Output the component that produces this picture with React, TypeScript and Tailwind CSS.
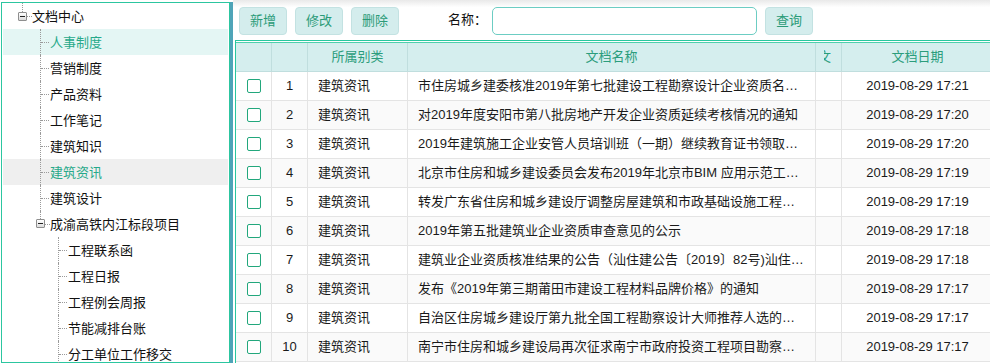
import React from 'react';

interface Doc {
  no: number;
  category: string;
  title: string;
  date: string;
}

const docs: Doc[] = [
  { no: 1, category: '建筑资讯', title: '市住房城乡建委核准2019年第七批建设工程勘察设计企业资质名…', date: '2019-08-29 17:21' },
  { no: 2, category: '建筑资讯', title: '对2019年度安阳市第八批房地产开发企业资质延续考核情况的通知', date: '2019-08-29 17:20' },
  { no: 3, category: '建筑资讯', title: '2019年建筑施工企业安管人员培训班（一期）继续教育证书领取…', date: '2019-08-29 17:20' },
  { no: 4, category: '建筑资讯', title: '北京市住房和城乡建设委员会发布2019年北京市BIM 应用示范工…', date: '2019-08-29 17:19' },
  { no: 5, category: '建筑资讯', title: '转发广东省住房和城乡建设厅调整房屋建筑和市政基础设施工程…', date: '2019-08-29 17:19' },
  { no: 6, category: '建筑资讯', title: '2019年第五批建筑业企业资质审查意见的公示', date: '2019-08-29 17:18' },
  { no: 7, category: '建筑资讯', title: '建筑业企业资质核准结果的公告（汕住建公告〔2019〕82号)汕住…', date: '2019-08-29 17:18' },
  { no: 8, category: '建筑资讯', title: '发布《2019年第三期莆田市建设工程材料品牌价格》的通知', date: '2019-08-29 17:17' },
  { no: 9, category: '建筑资讯', title: '自治区住房城乡建设厅第九批全国工程勘察设计大师推荐人选的…', date: '2019-08-29 17:17' },
  { no: 10, category: '建筑资讯', title: '南宁市住房和城乡建设局再次征求南宁市政府投资工程项目勘察…', date: '2019-08-29 17:17' },
];

// first level under 文档中心
const children = [
  { name: '人事制度', state: 'selected' },
  { name: '营销制度' },
  { name: '产品资料' },
  { name: '工作笔记' },
  { name: '建筑知识' },
  { name: '建筑资讯', state: 'hover' },
  { name: '建筑设计' },
];

const projectItems = ['工程联系函', '工程日报', '工程例会周报', '节能减排台账', '分工单位工作移交'];

const cols = 'grid grid-cols-[36px_36px_100px_408px_26px_151px]';

const MinusBox: React.FC = () => (
  <span className="flex h-[9px] w-[9px] shrink-0 items-center justify-center rounded-[1px] border border-[#8e8e8e] bg-gradient-to-b from-white to-[#dcdcdc]">
    <span className="h-px w-[5px] bg-[#222]" />
  </span>
);

const Elbow: React.FC = () => (
  <div className="flex h-full w-[9px] shrink-0 items-center border-l border-dotted border-[#9a9a9a]">
    <div className="w-full border-t border-dotted border-[#9a9a9a]" />
  </div>
);

const Sidebar: React.FC = () => (
  <div className="ml-px mt-[2px] w-[229px] shrink-0 border border-[#2cc6a0] bg-white px-px text-[13px] leading-none text-[#111]">
    {/* root */}
    <div className="flex h-[26px] items-center">
      <div className="w-[15px] shrink-0" />
      <div className="flex h-full w-[9px] shrink-0 flex-col items-center">
        <div className="h-[9px] border-l border-dotted border-[#9a9a9a]" />
        <MinusBox />
      </div>
      <div className="w-[5px] border-t border-dotted border-[#9a9a9a]" />
      <span>文档中心</span>
    </div>

    {children.map((c) => (
      <div
        key={c.name}
        className={`flex h-[26px] items-center ${
          c.state === 'selected' ? 'bg-[#e4f6f4]' : c.state === 'hover' ? 'bg-[#efefef]' : ''
        }`}
      >
        <div className="w-[37px] shrink-0" />
        <Elbow />
        <span className={`ml-px ${c.state ? 'text-[#27a98a]' : ''}`}>{c.name}</span>
      </div>
    ))}

    {/* 成渝高铁内江标段项目 */}
    <div className="flex h-[26px] items-center">
      <div className="w-[33px] shrink-0" />
      <div className="flex h-full w-[9px] shrink-0 flex-col items-center">
        <div className="h-[8px] border-l border-dotted border-[#9a9a9a]" />
        <MinusBox />
      </div>
      <div className="w-[5px] border-t border-dotted border-[#9a9a9a]" />
      <span>成渝高铁内江标段项目</span>
    </div>

    {projectItems.map((name) => (
      <div key={name} className="flex h-[26px] items-center">
        <div className="w-[55px] shrink-0" />
        <Elbow />
        <span className="ml-px">{name}</span>
      </div>
    ))}
  </div>
);

const ToolButton: React.FC<{ label: string }> = ({ label }) => (
  <button className="h-[28px] w-[48px] shrink-0 rounded-[4px] border border-[#c3e2e2] bg-[#d4eded] text-[13px] text-[#2b9b78]">
    {label}
  </button>
);

const Checkbox: React.FC = () => (
  <span className="block h-[14px] w-[14px] rounded-[2px] border-[1.5px] border-[#22a77c] bg-white" />
);

export default function App() {
  return (
    <div className="flex h-[363px] w-[990px] overflow-hidden bg-white font-['Liberation_Sans','Noto_Sans_CJK_SC',sans-serif]">
      <Sidebar />

      {/* splitter */}
      <div className="mt-[2px] w-[3px] shrink-0 bg-[#4fa4b8]" />

      <div className="flex min-w-0 flex-1 flex-col">
        {/* toolbar */}
        <div className="flex h-[40px] shrink-0 items-start gap-[8px] bg-gradient-to-b from-[#e9e9e9] via-white via-[18%] to-white pl-[6px] pt-[7px]">
          <ToolButton label="新增" />
          <ToolButton label="修改" />
          <ToolButton label="删除" />
          <span className="ml-[41px] w-[44px] shrink-0 pt-[6px] text-[13px] leading-none text-[#111]">名称：</span>
          <input className="-ml-[8px] h-[28px] w-[265px] shrink-0 rounded-[5px] border border-[#6ccdc3] bg-white px-2 text-[13px] outline-none" />
          <ToolButton label="查询" />
        </div>

        {/* table */}
        <div className="ml-[2px] flex-1 border-l border-t border-[#29c79f] pt-px">
          <div className="w-[757px]">
            <div className={`${cols} h-[30px] border-b border-t border-b-[#c0dede] border-t-[#4fd0ad] bg-[#d5eeee] text-[13px] text-[#2b9d7c]`}>
              <div className="border-r border-[#c0dede]" />
              <div className="border-r border-[#c0dede]" />
              <div className="flex items-center justify-center border-r border-[#c0dede]">所属别类</div>
              <div className="flex items-center justify-center border-r border-[#c0dede]">文档名称</div>
              <div className="flex items-center overflow-hidden border-r border-[#c0dede]">
                <span className="ml-[8px] block w-[7px] overflow-hidden">
                  <span className="-ml-[6px] inline-block">文</span>
                </span>
              </div>
              <div className="flex items-center justify-center">文档日期</div>
            </div>

            {docs.map((d) => (
              <div
                key={d.no}
                className={`${cols} h-[29px] border-b border-[#e4e4e4] text-[13px] text-[#1a1a1a] ${
                  d.no % 2 === 0 ? 'bg-[#fafafa]' : 'bg-white'
                }`}
              >
                <div className="flex items-center justify-center border-r border-[#e4e4e4]">
                  <Checkbox />
                </div>
                <div className="flex items-center justify-center border-r border-[#e4e4e4]">{d.no}</div>
                <div className="flex items-center border-r border-[#e4e4e4] pl-[10px]">{d.category}</div>
                <div className="flex min-w-0 items-center border-r border-[#e4e4e4] pl-[10px] pr-[6px]">
                  <span className="truncate">{d.title}</span>
                </div>
                <div className="border-r border-[#e4e4e4]" />
                <div className="flex items-center justify-center">{d.date}</div>
              </div>
            ))}
          </div>
        </div>
      </div>
    </div>
  );
}
